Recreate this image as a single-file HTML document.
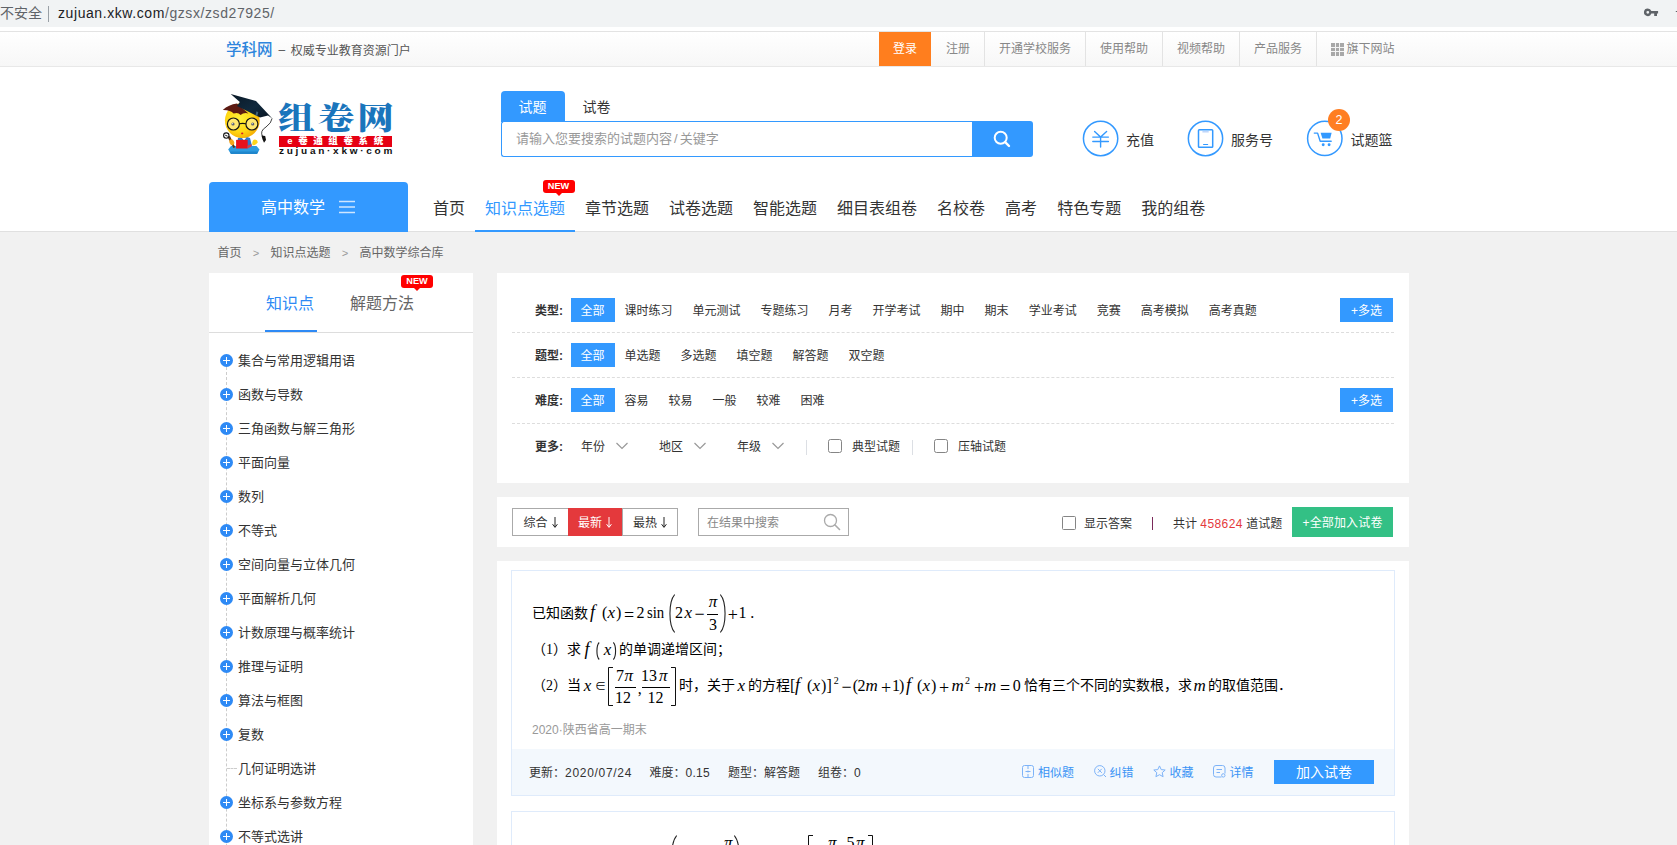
<!DOCTYPE html>
<html lang="zh-CN">
<head>
<meta charset="utf-8">
<title>高中数学综合库 - 知识点选题 - 组卷网</title>
<style>
*{margin:0;padding:0;box-sizing:border-box;}
html,body{width:1677px;height:845px;overflow:hidden;}
body{position:relative;background:#f1f1f1;font-family:"Liberation Sans","Noto Sans CJK SC",sans-serif;font-size:12px;color:#333;}
a{text-decoration:none;color:inherit;}
ul{list-style:none;}
.abs{position:absolute;}
/* browser url bar */
#urlbar{position:absolute;left:0;top:0;width:1677px;height:27px;background:#f1f3f4;}
#urlbar .t{position:absolute;top:0;height:26px;line-height:26px;font-size:14px;white-space:nowrap;}
#urlbar .u{letter-spacing:.58px;}
/* top bar */
#topbar{position:absolute;left:0;top:31px;width:1677px;height:36px;background:linear-gradient(#fff,#f7f7f7);border-top:1px solid #e3e3e3;border-bottom:1px solid #e8e8e8;}
#topbar .brand{position:absolute;left:226px;top:0;height:34px;line-height:35px;white-space:nowrap;}
#topbar .brand b{font-size:15.5px;color:#2f86dd;font-weight:500;}
#topbar .brand i{font-style:normal;margin:0 5.5px 0 6px;position:relative;top:-1.5px;}
#topbar .brand span{font-size:12px;color:#555;}
#toplinks{position:absolute;left:879px;top:0;height:34px;display:flex;}
#toplinks a{display:block;height:34px;line-height:34px;padding:0 14px;color:#888;font-size:12px;border-right:1px solid #e3e3e3;white-space:nowrap;}
#toplinks a.login{background:#ff7e1e;color:#fff;border-right:0;margin-right:1px;}
#toplinks a.grid{position:relative;padding-left:29.5px;}
#toplinks a.grid svg{position:absolute;left:14px;top:11px;}
#toplinks a:last-child{border-right:0;}
/* header */
#header{position:absolute;left:0;top:67px;width:1677px;height:165px;}
#hbg{position:absolute;left:0;top:67px;width:1677px;height:164px;background:#fff;}
#hline{position:absolute;left:0;top:231px;width:1677px;height:1px;background:#e0e0e0;}

/* logo */
#logo{position:absolute;left:220px;top:26px;width:175px;height:64px;}
#logo .zj{position:absolute;left:58px;top:8px;width:118px;height:36px;line-height:36px;font-family:"Liberation Serif","Noto Serif CJK SC",serif;font-weight:900;font-size:31px;color:#1a75bc;white-space:nowrap;letter-spacing:2.6px;transform:scaleX(1.18);transform-origin:0 0;}
#logo .red{position:absolute;left:59px;top:43px;width:113px;height:10.5px;background:#e60012;color:#fff;font-size:9.5px;line-height:10.5px;font-weight:900;text-align:center;letter-spacing:5.6px;padding-left:5px;white-space:nowrap;overflow:hidden;}
#logo .dom{position:absolute;left:59px;top:54px;width:114px;height:9px;line-height:9px;font-size:8.5px;font-weight:bold;color:#111;letter-spacing:2.3px;white-space:nowrap;transform:scaleX(1.18);transform-origin:0 0;}
/* search */
#stab1{position:absolute;left:501px;top:24px;width:64px;text-indent:-1px;height:31px;background:#3399ff;color:#fff;font-size:14px;line-height:32px;text-align:center;border-radius:4px 4px 0 0;}
#stab2{position:absolute;left:564.5px;top:24px;width:64px;height:31px;color:#333;font-size:14px;line-height:32px;text-align:center;}
#sinput{position:absolute;left:501px;top:54px;width:472px;height:36px;border:1px solid #3399ff;border-right:0;border-radius:3px 0 0 3px;background:#fff;color:#999;font-size:13px;line-height:34px;padding-left:14px;white-space:nowrap;}
#sbtn{position:absolute;left:972px;top:54px;width:61px;height:36px;background:#3399ff;border-radius:0 3px 3px 0;}
.hic{position:absolute;top:54px;width:35px;height:35px;border:1.6px solid #3399ff;border-radius:50%;}
.hit{position:absolute;top:63px;height:20px;line-height:20px;font-size:14px;color:#333;white-space:nowrap;}
#badge{position:absolute;left:1327.8px;top:41.9px;width:22.2px;height:22.2px;border-radius:50%;background:#ff7e22;color:#fff;font-size:12.5px;line-height:22px;text-align:center;}
/* nav */
#subj{position:absolute;left:209px;top:115px;width:199px;height:50px;background:#3399ff;border-radius:4px 4px 0 0;color:#fff;font-size:16px;line-height:50px;}
#nav{position:absolute;left:423px;top:125px;height:40px;display:flex;}
#nav a{display:block;padding:0 10px;height:40px;line-height:34px;font-size:16px;color:#333;white-space:nowrap;}
#nav a.on{color:#3399ff;border-bottom:2px solid #3399ff;}
.new{position:absolute;width:32px;height:13px;background:#f00;border-radius:3px;color:#fff;font-size:9.2px;font-weight:bold;line-height:13px;text-align:center;letter-spacing:0;}
.new:after{content:"";position:absolute;left:13px;top:13px;border:3px solid transparent;border-top-color:#f00;border-bottom:0;}

/* breadcrumb */
#crumb{position:absolute;left:217.5px;top:243px;height:20px;line-height:20px;font-size:12px;color:#666;white-space:nowrap;}
#crumb i{font-style:normal;display:inline-block;width:29px;text-align:center;color:#999;font-family:"Liberation Mono",monospace;font-size:11px;}
/* left */
#left{position:absolute;left:209px;top:273px;width:264px;height:600px;background:#fff;}
#left .tabs{position:absolute;left:0;top:0;width:264px;height:60px;border-bottom:1px solid #ddd;}
#left .tabs span{position:absolute;top:19px;height:24px;line-height:24px;font-size:16px;white-space:nowrap;}
#left .tabs .ul{position:absolute;left:56px;top:56.5px;width:52px;height:2.5px;background:#2e8af5;}
#tree{position:absolute;left:0;top:70px;width:264px;}
#tree .vl{position:absolute;left:17px;top:24px;width:0;height:560px;border-left:1px dashed #ccc;}
#tree li{position:relative;height:34px;line-height:36px;font-size:13px;color:#333;padding-left:29px;white-space:nowrap;}
#tree li .pl{position:absolute;left:11px;top:11px;width:13px;height:13px;border-radius:50%;background:#2e8af5;}
#tree li .pl:before{content:"";position:absolute;left:3px;top:5.75px;width:7px;height:1.5px;background:#fff;}
#tree li .pl:after{content:"";position:absolute;left:5.75px;top:3px;width:1.5px;height:7px;background:#fff;}
#tree li .hl{position:absolute;left:18px;top:17px;width:10px;height:0;border-top:1px dashed #ccc;}
/* filter */
#filter{position:absolute;left:497px;top:273px;width:912px;height:210px;background:#fff;}
#filter .row{position:absolute;left:15px;width:882px;height:45px;border-bottom:1px dashed #ddd;}
#filter .lab{position:absolute;left:22px;top:0;font-weight:bold;font-size:12px;color:#333;height:24px;line-height:26px;white-space:nowrap;}
#filter .its{position:absolute;left:59px;top:0;display:flex;height:24px;}
#filter .its a{display:block;padding:0 10px;height:24px;line-height:26px;font-size:12px;color:#333;white-space:nowrap;}
#filter .its a.on{background:#3399ff;color:#fff;}
#filter .multi{position:absolute;left:828px;width:53px;height:24px;background:#3399ff;color:#fff;font-size:12px;line-height:26px;text-align:center;}
.cb{position:absolute;width:14px;height:14px;border:1px solid #858585;border-radius:2.5px;background:#fff;}
/* sort bar */
#sort{position:absolute;left:497px;top:497px;width:912px;height:50px;background:#fff;}
#sort .sb{position:absolute;top:11px;height:28px;width:56px;border:1px solid #aaa;background:#fff;font-size:12px;line-height:29px;text-align:center;color:#333;white-space:nowrap;}
#sort .sb.on{background:#e4393c;border-color:#e4393c;color:#fff;z-index:2;}
#sort .sb svg{margin-left:4px;vertical-align:-1px;}
#sort .si{position:absolute;left:201px;top:11px;width:151px;height:28px;border:1px solid #aaa;font-size:12px;line-height:28px;color:#888;padding-left:8px;}
#sort .all{position:absolute;left:795px;top:10px;width:101px;height:30px;background:#33c085;color:#fff;font-size:12px;line-height:32px;text-align:center;white-space:nowrap;letter-spacing:.15px;}
/* list */
#list{position:absolute;left:497px;top:561px;width:912px;height:300px;background:#fff;}
.q{position:absolute;left:14px;width:884px;border:1px solid #dfebfb;background:#fff;}
.q .ft{position:absolute;left:0;bottom:0;width:882px;height:46px;background:#f3f8fd;font-size:12px;color:#333;}
.q .ft span{position:absolute;top:13.5px;height:20px;line-height:20px;white-space:nowrap;}
.q .ft em{font-style:normal;letter-spacing:.7px;}
.q .ft .lk{color:#3a94f5;}
.q .ft .add{position:absolute;left:762px;top:11px;width:100px;height:24px;background:#3399ff;color:#fff;font-size:14px;line-height:24px;text-align:center;}
.q .src{position:absolute;left:20px;font-size:12px;color:#999;height:20px;line-height:20px;white-space:nowrap;}
.qt{position:absolute;font-size:14px;color:#000;height:24px;line-height:24px;white-space:nowrap;}
.m{font-family:"Liberation Serif",serif;font-size:16px;}
.m i{font-style:italic;}

#mth{position:absolute;left:0;top:0;width:0;height:0;}
.k{position:absolute;line-height:1;transform-origin:0 50%;font-family:"Liberation Serif",serif;font-size:15px;color:#000;white-space:nowrap;}
.k.i{font-style:italic;}
.c{position:absolute;height:24px;line-height:24px;font-size:14px;color:#000;white-space:nowrap;}
.c b{font-weight:normal;font-family:"Liberation Serif",serif;}
</style>
</head>
<body>
<div id="urlbar">
  <span class="t" style="left:0;color:#5f6368;">不安全</span>
  <span class="abs" style="left:48px;top:6px;width:1px;height:16px;background:#9aa0a6;"></span>
  <span class="t u" style="left:58px;color:#202124;">zujuan.xkw.com<span style="color:#5f6368;">/gzsx/zsd27925/</span></span>
</div>
<svg class="abs" style="left:1640px;top:4px" width="37" height="18" viewBox="1640 4 37 18"><path d="M1647.8 8.5a3.8 3.8 0 1 0 3.55 5.0h2.85v2.4h2.8v-2.4h1.1v-2.4h-6.75A3.8 3.8 0 0 0 1647.8 8.500zM1647.8 10.900a1.400 1.400 0 1 1 0 2.800a1.400 1.400 0 0 1 0-2.800z" fill="#5f6368" fill-rule="evenodd"/><path d="M1675.800 11.500h1.500" stroke="#5f6368" stroke-width="1.200"/></svg>
<div class="abs" style="left:0;top:27px;width:1677px;height:4px;background:#fff;"></div>
<div id="topbar">
  <div class="brand"><b>学科网</b><span><i>–</i>权威专业教育资源门户</span></div>
  <div id="toplinks">
    <a class="login">登录</a><a>注册</a><a>开通学校服务</a><a>使用帮助</a><a>视频帮助</a><a>产品服务</a><a class="grid"><svg width="13" height="13" viewBox="0 0 13 13"><rect x="0" y="0" width="13" height="13" fill="#a8a8a8"/><path d="M4.5 0V13M8.5 0V13M0 4.5H13M0 8.5H13" stroke="#f4f4f4" stroke-width="1"/></svg>旗下网站</a>
  </div>
</div>
<div id="hbg"></div><div id="hline"></div>
<div id="header">
  <div id="logo">
    <svg class="abs" style="left:0;top:0" width="56" height="64" viewBox="220 93 56 64">
      <defs><radialGradient id="fg" cx="0.42" cy="0.45" r="0.62"><stop offset="0" stop-color="#fff23a"/><stop offset="0.6" stop-color="#ffd814"/><stop offset="1" stop-color="#f5a800"/></radialGradient>
      <linearGradient id="cg" x1="0" y1="0" x2="1" y2="1"><stop offset="0" stop-color="#0a1826"/><stop offset="0.55" stop-color="#10293d"/><stop offset="1" stop-color="#081420"/></linearGradient></defs>
      <!-- base -->
      <path d="M231 146 H256.5 L259.5 149.6 L257 154 H231 L228.2 149.6 Z" fill="#2d9be0"/>
      <path d="M229.5 151.5 H258.3 L257 154 H231 Z" fill="#1f86cc"/>
      <!-- collar/body -->
      <path d="M238 138 Q244 135.5 250 138 L252 146 H236.5 Z" fill="#2f78cc"/>
      <path d="M241.5 137.5 L244 140.5 L246.5 137.5 Z" fill="#fff"/>
      <!-- right hand -->
      <path d="M252.2 143.5 Q252.5 139.5 255 139.6 Q258.2 140.2 257.6 142.6 Q256 145.4 252.6 145.2 Z" fill="#ffd51a"/>
      <!-- red book -->
      <rect x="236.1" y="139.9" width="11.6" height="8.6" fill="#e8111d"/>
      <path d="M247.7 145.5 L251.5 144 L251.5 146.5 L247.7 148.5 Z" fill="#d8404a"/>
      <!-- face -->
      <circle cx="242.3" cy="120.6" r="17.4" fill="url(#fg)"/>
      <!-- hair -->
      <path d="M222.8 110 Q228.5 104.8 237 103.6 L248.5 113.4 Q243.5 112.4 240.6 115 Q238 111.8 233.6 113.6 Q230.5 109.8 222.8 110 Z" fill="#5c1a12"/>
      <!-- cap -->
      <path d="M230.7 94 L256 101 L272.3 118.4 L268 115.6 L260 117.6 Q250 112.5 237 106 L239.8 102 Z" fill="url(#cg)"/>
      <path d="M256.5 111.2 L258.3 112.2 L257.2 116.2 L255.4 115.2 Z" fill="#4a7088" opacity=".8"/>
      <!-- tassel -->
      <path d="M272.1 118.4 Q271.5 123 266 127 Q259.5 131 262.6 136.5" fill="none" stroke="#111" stroke-width=".8"/>
      <path d="M261.4 135.6 L265.2 136 L266 140 L264 142.8 L262.6 139.6 Z" fill="#111"/>
      <!-- glasses -->
      <circle cx="233.4" cy="124" r="6" fill="#ffe871" stroke="#141414" stroke-width="1.2"/>
      <circle cx="251.9" cy="124" r="6" fill="#ffe871" stroke="#141414" stroke-width="1.2"/>
      <path d="M239.4 123.8 Q242.6 122.8 245.9 123.8" fill="none" stroke="#141414" stroke-width="1.2"/>
      <circle cx="233" cy="124" r="1.6" fill="#5a6070"/><circle cx="252.7" cy="124" r="1.6" fill="#5a6070"/>
      <circle cx="232.6" cy="123.6" r=".6" fill="#dfe6f0"/><circle cx="252.3" cy="123.6" r=".6" fill="#dfe6f0"/>
      <ellipse cx="242.2" cy="133.4" rx="1.1" ry=".9" fill="#d61f26"/>
      <!-- tool -->
      <path d="M227.5 137 L230 136 L235.2 147.2 L233.4 148 Z" fill="#5a3416"/>
      <circle cx="226.3" cy="135.6" r="2.7" fill="#fff" stroke="#161616" stroke-width="1.1"/>
      <path d="M225.2 135.2 L227.6 136.2" stroke="#161616" stroke-width="1"/>
      <ellipse cx="231.8" cy="142.2" rx="2.3" ry="3" fill="#f5a51a" transform="rotate(-25 231.8 142.2)"/>
    </svg>
    <div class="zj">组卷网</div>
    <div class="red">e卷通组卷系统</div>
    <div class="dom">zujuan·xkw·com</div>
  </div>
  <div id="stab1">试题</div><div id="stab2">试卷</div>
  <div id="sinput">请输入您要搜索的试题内容<span style="margin:0 2px;">/</span>关键字</div>
  <div id="sbtn"><svg class="abs" style="left:20px;top:8px" width="20" height="20" viewBox="0 0 20 20"><circle cx="8.7" cy="8.7" r="6" fill="none" stroke="#fff" stroke-width="2"/><path d="M13.2 13.2 L17 17" stroke="#fff" stroke-width="2.4" stroke-linecap="round"/></svg></div>

  <svg class="abs" style="left:1080px;top:51px" width="41" height="41" viewBox="1080 118 41 41">
    <circle cx="1100.6" cy="138.5" r="17.15" fill="none" stroke="#3399ff" stroke-width="1.5"/>
    <path d="M1094.6 131.4 L1100.6 137 L1106.6 131.4 M1092.8 137.1 H1108.4 M1092.8 141.5 H1108.4 M1100.6 137 V147" fill="none" stroke="#3399ff" stroke-width="1.4" stroke-linecap="round"/></svg>
  <div class="hit" style="left:1126px;">充值</div>
  <svg class="abs" style="left:1185px;top:51px" width="41" height="41" viewBox="1185 118 41 41">
    <circle cx="1205.5" cy="138.5" r="17.15" fill="none" stroke="#3399ff" stroke-width="1.5"/>
    <rect x="1198.5" y="129.8" width="14.2" height="17.4" rx="0.8" fill="none" stroke="#3399ff" stroke-width="1.5"/>
    <path d="M1202.4 131.8 H1208.7" stroke="#b9d2fa" stroke-width="1.4"/><path d="M1203.6 144.5 H1207.6" stroke="#3399ff" stroke-width="1.2" stroke-linecap="round"/></svg>
  <div class="hit" style="left:1231px;">服务号</div>
  <svg class="abs" style="left:1304px;top:51px" width="41" height="41" viewBox="1304 118 41 41">
    <circle cx="1324.8" cy="138.4" r="17.2" fill="none" stroke="#3399ff" stroke-width="1.5"/>
    <path d="M1314.3 133.1 H1317.6 L1320.2 141.3 H1331.2" fill="none" stroke="#3399ff" stroke-width="1.4" stroke-linejoin="round" stroke-linecap="round"/>
    <path d="M1320.6 132.8 H1331.6 L1330.2 138.6 H1322.4 Z" fill="#3399ff"/>
    <circle cx="1323.2" cy="144.7" r="1.45" fill="#3399ff"/><circle cx="1329.1" cy="144.7" r="1.45" fill="#3399ff"/></svg>
  <div id="badge">2</div>
  <div class="hit" style="left:1350.5px;">试题篮</div>

  <div id="subj"><span class="abs" style="left:52px;top:1px;">高中数学</span>
    <svg class="abs" style="left:130px;top:18px" width="17" height="14" viewBox="0 0 17 14"><path d="M0 1.5 H16 M0 7 H16 M0 12.5 H16" stroke="#cfe6ff" stroke-width="1.6"/></svg></div>
  <div id="nav"><a>首页</a><a class="on">知识点选题</a><a>章节选题</a><a>试卷选题</a><a>智能选题</a><a>细目表组卷</a><a>名校卷</a><a>高考</a><a>特色专题</a><a>我的组卷</a></div>
  <div class="new" style="left:542.5px;top:113px;">NEW</div>
</div>

<div id="crumb">首页<i>&gt;</i>知识点选题<i>&gt;</i>高中数学综合库</div>
<div id="left">
  <div class="tabs"><span style="left:57px;color:#2e8af5;">知识点</span><span style="left:141px;color:#666;">解题方法</span><div class="ul"></div>
    <div class="new" style="left:192px;top:2px;">NEW</div></div>
  <ul id="tree">
    <div class="vl"></div>
    <li><b class="pl"></b>集合与常用逻辑用语</li>
    <li><b class="pl"></b>函数与导数</li>
    <li><b class="pl"></b>三角函数与解三角形</li>
    <li><b class="pl"></b>平面向量</li>
    <li><b class="pl"></b>数列</li>
    <li><b class="pl"></b>不等式</li>
    <li><b class="pl"></b>空间向量与立体几何</li>
    <li><b class="pl"></b>平面解析几何</li>
    <li><b class="pl"></b>计数原理与概率统计</li>
    <li><b class="pl"></b>推理与证明</li>
    <li><b class="pl"></b>算法与框图</li>
    <li><b class="pl"></b>复数</li>
    <li><b class="hl"></b>几何证明选讲</li>
    <li><b class="pl"></b>坐标系与参数方程</li>
    <li><b class="pl"></b>不等式选讲</li>
    <li><b class="pl"></b>矩阵与变换</li>
  </ul>
</div>
<div id="filter">
  <div class="row" style="top:0;height:60px;"></div>
  <div class="row" style="top:60px;"></div>
  <div class="row" style="top:105px;height:46px;"></div>
  <div class="lab" style="left:38px;top:25px;">类型:</div>
  <div class="its" style="left:73.5px;top:25px;"><a class="on">全部</a><a>课时练习</a><a>单元测试</a><a>专题练习</a><a>月考</a><a>开学考试</a><a>期中</a><a>期末</a><a>学业考试</a><a>竞赛</a><a>高考模拟</a><a>高考真题</a></div>
  <div class="multi" style="left:843px;top:25px;">+多选</div>
  <div class="lab" style="left:38px;top:70px;">题型:</div>
  <div class="its" style="left:73.5px;top:70px;"><a class="on">全部</a><a>单选题</a><a>多选题</a><a>填空题</a><a>解答题</a><a>双空题</a></div>
  <div class="lab" style="left:38px;top:115px;">难度:</div>
  <div class="its" style="left:73.5px;top:115px;"><a class="on">全部</a><a>容易</a><a>较易</a><a>一般</a><a>较难</a><a>困难</a></div>
  <div class="multi" style="left:843px;top:115px;">+多选</div>
  <div class="lab" style="left:38px;top:161px;">更多:</div>
  <div class="lab" style="left:84px;top:161px;font-weight:normal;">年份</div>
  <div class="lab" style="left:162px;top:161px;font-weight:normal;">地区</div>
  <div class="lab" style="left:240px;top:161px;font-weight:normal;">年级</div>
  <svg class="abs" style="left:119px;top:169px" width="12" height="8" viewBox="0 0 12 8"><path d="M0.5 1 L6 6.5 L11.5 1" fill="none" stroke="#999" stroke-width="1.2"/></svg>
  <svg class="abs" style="left:197px;top:169px" width="12" height="8" viewBox="0 0 12 8"><path d="M0.5 1 L6 6.5 L11.5 1" fill="none" stroke="#999" stroke-width="1.2"/></svg>
  <svg class="abs" style="left:275px;top:169px" width="12" height="8" viewBox="0 0 12 8"><path d="M0.5 1 L6 6.5 L11.5 1" fill="none" stroke="#999" stroke-width="1.2"/></svg>
  <span class="abs" style="left:309px;top:167px;width:1px;height:15px;background:#dcdfe4;"></span>
  <span class="cb" style="left:331px;top:166px;"></span>
  <div class="lab" style="left:355px;top:161px;font-weight:normal;">典型试题</div>
  <span class="abs" style="left:415px;top:167px;width:1px;height:15px;background:#dcdfe4;"></span>
  <span class="cb" style="left:437px;top:166px;"></span>
  <div class="lab" style="left:461px;top:161px;font-weight:normal;">压轴试题</div>
</div>
<div id="sort">
  <div class="sb" style="left:15px;width:57px;">综合<svg width="6" height="11" viewBox="0 0 6 11"><path d="M3 0V10M0.6 7.2L3 10.4L5.4 7.2" fill="none" stroke="#222" stroke-width="1"/></svg></div>
  <div class="sb on" style="left:71px;width:54px;">最新<svg width="6" height="11" viewBox="0 0 6 11"><path d="M3 0V10M0.6 7.2L3 10.4L5.4 7.2" fill="none" stroke="#fff" stroke-width="1"/></svg></div>
  <div class="sb" style="left:125px;">最热<svg width="6" height="11" viewBox="0 0 6 11"><path d="M3 0V10M0.6 7.2L3 10.4L5.4 7.2" fill="none" stroke="#222" stroke-width="1"/></svg></div>
  <div class="si">在结果中搜索</div>
  <svg class="abs" style="left:326px;top:16px" width="18" height="18" viewBox="0 0 18 18"><circle cx="7.5" cy="7.5" r="6" fill="none" stroke="#aaa" stroke-width="1.3"/><path d="M12 12 L16.5 16.5" stroke="#aaa" stroke-width="1.6" stroke-linecap="round"/></svg>
  <span class="cb" style="left:565px;top:19px;border-radius:1.5px;"></span>
  <span class="abs" style="left:587px;top:17px;height:20px;line-height:20px;">显示答案</span>
  <span class="abs" style="left:655px;top:20px;width:1px;height:13px;background:#7a2a5a;"></span>
  <span class="abs" style="left:676px;top:17px;height:20px;line-height:20px;white-space:nowrap;">共计 <span style="color:#e4393c;letter-spacing:.4px;">458624</span> 道试题</span>
  <div class="all">+全部加入试卷</div>
</div>
<div id="list">
  <div class="q" style="top:9px;height:226px;">
    <div class="src" style="top:149px;">2020·陕西省高一期末</div>
    <div class="ft">
      <span style="left:17px;">更新：<em>2020/07/24</em></span><span style="left:137.5px;">难度：<em style="letter-spacing:.25px;">0.15</em></span><span style="left:216px;">题型：解答题</span><span style="left:306px;">组卷：0</span>
      <svg class="abs" style="left:510px;top:16px" width="12" height="13" viewBox="0 0 12 13"><rect x=".5" y=".5" width="11" height="12" rx="2" fill="none" stroke="#7db3f8"/><path d="M6 .5V4M6 9V12.5M3.5 6.5H8.5M6 5.5V7.5" stroke="#7db3f8" fill="none"/></svg>
      <span class="lk" style="left:526px;">相似题</span>
      <svg class="abs" style="left:581.5px;top:16px" width="13" height="13" viewBox="0 0 13 13"><circle cx="5.8" cy="5.8" r="5.2" fill="none" stroke="#7db3f8"/><path d="M3.8 3.8L7.8 7.8M7.8 3.8L3.8 7.8M9.6 9.6L12 12" stroke="#7db3f8" fill="none"/></svg>
      <span class="lk" style="left:597.5px;">纠错</span>
      <svg class="abs" style="left:641px;top:16px" width="13" height="13" viewBox="0 0 13 13"><path d="M6.5 .9L8.2 4.6L12.2 5L9.2 7.7L10.1 11.7L6.5 9.7L2.9 11.7L3.8 7.7L.8 5L4.8 4.6Z" fill="none" stroke="#7db3f8" stroke-linejoin="round"/></svg>
      <span class="lk" style="left:657.5px;">收藏</span>
      <svg class="abs" style="left:701px;top:16px" width="13" height="13" viewBox="0 0 13 13"><path d="M8.5 12H3A2.5 2.5 0 0 1 .5 9.500V3A2.500 2.500 0 0 1 3 .5H9.500A2.500 2.500 0 0 1 12 3V8.500" fill="none" stroke="#7db3f8"/><path d="M3.500 4.500H9M3.500 7.500H7" stroke="#7db3f8"/><circle cx="10.3" cy="10.400" r="1.700" fill="none" stroke="#7db3f8"/></svg>
      <span class="lk" style="left:717.5px;">详情</span>
      <div class="add">加入试卷</div>
    </div>
  </div>
  <div class="q" style="top:250px;height:100px;"></div>
</div>

<div id="mth">
<span class="c" style="left:532px;top:601px;">已知函数</span>
<span class="c" style="left:532px;top:637px;">（<b>1</b>）求</span>
<span class="c" style="left:619px;top:637px;">的单调递增区间；</span>
<span class="c" style="left:532px;top:673px;">（<b>2</b>）当</span>
<span class="c" style="left:679px;top:673px;">时，关于</span>
<span class="c" style="left:748px;top:673px;">的方程</span>
<span class="c" style="left:1024px;top:673px;">恰有三个不同的实数根，求</span>
<span class="c" style="left:1208px;top:673px;">的取值范围．</span>
<!--M0--><span class="k i" style="left:590.0px;top:603px;font-size:18px;">f</span>
<span class="k" style="left:602.0px;top:605px;font-size:16px;">(</span>
<span class="k i" style="left:607.4px;top:604px;font-size:17px;">x</span>
<span class="k" style="left:616.0px;top:605px;font-size:16px;">)</span>
<span class="k" style="left:624.0px;top:606px;font-size:18px;">=</span>
<span class="k" style="left:636.4px;top:605px;font-size:16px;">2</span>
<span class="k" style="left:646.9px;top:605px;font-size:16px;transform:scaleX(0.924);">sin</span>
<svg class="abs" style="left:668px;top:594px" width="7" height="39" viewBox="0 0 7 39"><path d="M6.7 0.5 C0.35000000000000003 7.800000000000001 0.35000000000000003 31.200000000000003 6.7 38.5" fill="none" stroke="#222" stroke-width="1.1"/></svg>
<span class="k" style="left:675.0px;top:605px;font-size:16px;">2</span>
<span class="k i" style="left:684.6px;top:604px;font-size:17px;">x</span>
<span class="k" style="left:694.4px;top:605px;font-size:18px;">−</span>
<span class="k i" style="left:708.8px;top:593px;font-size:17px;">π</span>
<span class="abs" style="left:707px;top:614px;width:11px;height:1px;background:#000;"></span>
<span class="k" style="left:708.9px;top:617px;font-size:16px;">3</span>
<svg class="abs" style="left:720px;top:594px" width="7" height="39" viewBox="0 0 7 39"><path d="M0.3 0.5 C6.6499999999999995 7.800000000000001 6.6499999999999995 31.200000000000003 0.3 38.5" fill="none" stroke="#222" stroke-width="1.1"/></svg>
<span class="k" style="left:727.7px;top:606px;font-size:18px;">+</span>
<span class="k" style="left:738.5px;top:605px;font-size:16px;">1</span>
<span class="k" style="left:750.2px;top:605px;font-size:16px;">.</span>
<span class="k i" style="left:584.5px;top:640px;font-size:18px;">f</span>
<svg class="abs" style="left:596px;top:642px" width="3.5" height="18" viewBox="0 0 3.5 18"><path d="M3.2 0.5 C0.17500000000000002 3.6 0.17500000000000002 14.4 3.2 17.5" fill="none" stroke="#222" stroke-width="1.1"/></svg>
<span class="k i" style="left:603.8px;top:641px;font-size:17px;">x</span>
<svg class="abs" style="left:613px;top:642px" width="3.5" height="18" viewBox="0 0 3.5 18"><path d="M0.3 0.5 C3.3249999999999997 3.6 3.3249999999999997 14.4 0.3 17.5" fill="none" stroke="#222" stroke-width="1.1"/></svg>
<span class="k i" style="left:583.8px;top:677px;font-size:17px;">x</span>
<span class="k" style="left:595.0px;top:681px;font-size:11px;">∈</span>
<svg class="abs" style="left:608px;top:667px" width="5" height="39" viewBox="0 0 5 39"><path d="M5 0.5 H0.5 V38.5 H5" fill="none" stroke="#111" stroke-width="1"/></svg>
<span class="k" style="left:616.0px;top:668px;font-size:16px;">7</span>
<span class="k i" style="left:624.5px;top:667px;font-size:17px;">π</span>
<span class="abs" style="left:615px;top:687px;width:21px;height:1px;background:#000;"></span>
<span class="k" style="left:615.0px;top:690px;font-size:16px;">12</span>
<span class="k" style="left:637.8px;top:681px;font-size:16px;">,</span>
<span class="k" style="left:641.0px;top:668px;font-size:16px;">13</span>
<span class="k i" style="left:659.0px;top:667px;font-size:17px;">π</span>
<span class="abs" style="left:642px;top:687px;width:28px;height:1px;background:#000;"></span>
<span class="k" style="left:647.5px;top:690px;font-size:16px;">12</span>
<svg class="abs" style="left:671px;top:667px" width="5" height="39" viewBox="0 0 5 39"><path d="M0 0.5 H4.5 V38.5 H0" fill="none" stroke="#111" stroke-width="1"/></svg>
<span class="k i" style="left:737.5px;top:677px;font-size:17px;">x</span>
<span class="k" style="left:790.0px;top:678px;font-size:16px;">[</span>
<span class="k i" style="left:795.0px;top:676px;font-size:18px;">f</span>
<span class="k" style="left:807.0px;top:678px;font-size:16px;">(</span>
<span class="k i" style="left:812.5px;top:677px;font-size:17px;">x</span>
<span class="k" style="left:821.0px;top:678px;font-size:16px;">)</span>
<span class="k" style="left:826.5px;top:678px;font-size:16px;">]</span>
<span class="k" style="left:833.8px;top:676px;font-size:10px;">2</span>
<span class="k" style="left:841.5px;top:678px;font-size:18px;">−</span>
<span class="k" style="left:852.8px;top:678px;font-size:16px;">(</span>
<span class="k" style="left:857.5px;top:678px;font-size:16px;">2</span>
<span class="k i" style="left:865.5px;top:677px;font-size:17px;">m</span>
<span class="k" style="left:881.0px;top:679px;font-size:18px;">+</span>
<span class="k" style="left:892.0px;top:678px;font-size:16px;">1</span>
<span class="k" style="left:899.0px;top:678px;font-size:16px;">)</span>
<span class="k i" style="left:906.0px;top:676px;font-size:18px;">f</span>
<span class="k" style="left:917.0px;top:678px;font-size:16px;">(</span>
<span class="k i" style="left:922.5px;top:677px;font-size:17px;">x</span>
<span class="k" style="left:931.0px;top:678px;font-size:16px;">)</span>
<span class="k" style="left:939.0px;top:679px;font-size:18px;">+</span>
<span class="k i" style="left:951.5px;top:677px;font-size:17px;">m</span>
<span class="k" style="left:965.0px;top:676px;font-size:10px;">2</span>
<span class="k" style="left:974.0px;top:679px;font-size:18px;">+</span>
<span class="k i" style="left:984.0px;top:677px;font-size:17px;">m</span>
<span class="k" style="left:1000.0px;top:679px;font-size:18px;">=</span>
<span class="k" style="left:1012.8px;top:678px;font-size:16px;">0</span>
<span class="k i" style="left:1193.5px;top:677px;font-size:17px;">m</span>
<svg class="abs" style="left:670px;top:835px" width="7" height="39" viewBox="0 0 7 39"><path d="M6.7 0.5 C0.35000000000000003 7.800000000000001 0.35000000000000003 31.200000000000003 6.7 38.5" fill="none" stroke="#222" stroke-width="1.1"/></svg>
<span class="k i" style="left:724.0px;top:834px;font-size:17px;">π</span>
<svg class="abs" style="left:734px;top:835px" width="7" height="39" viewBox="0 0 7 39"><path d="M0.3 0.5 C6.6499999999999995 7.800000000000001 6.6499999999999995 31.200000000000003 0.3 38.5" fill="none" stroke="#222" stroke-width="1.1"/></svg>
<svg class="abs" style="left:808px;top:835px" width="5" height="39" viewBox="0 0 5 39"><path d="M5 0.5 H0.5 V38.5 H5" fill="none" stroke="#111" stroke-width="1"/></svg>
<span class="k i" style="left:828.0px;top:834px;font-size:17px;">π</span>
<span class="k" style="left:837.5px;top:838px;font-size:16px;">,</span>
<span class="k" style="left:846.5px;top:835px;font-size:16px;">5</span>
<span class="k i" style="left:856.0px;top:834px;font-size:17px;">π</span>
<svg class="abs" style="left:868px;top:835px" width="5" height="39" viewBox="0 0 5 39"><path d="M0 0.5 H4.5 V38.5 H0" fill="none" stroke="#111" stroke-width="1"/></svg><!--M1--></div>
</body>
</html>
